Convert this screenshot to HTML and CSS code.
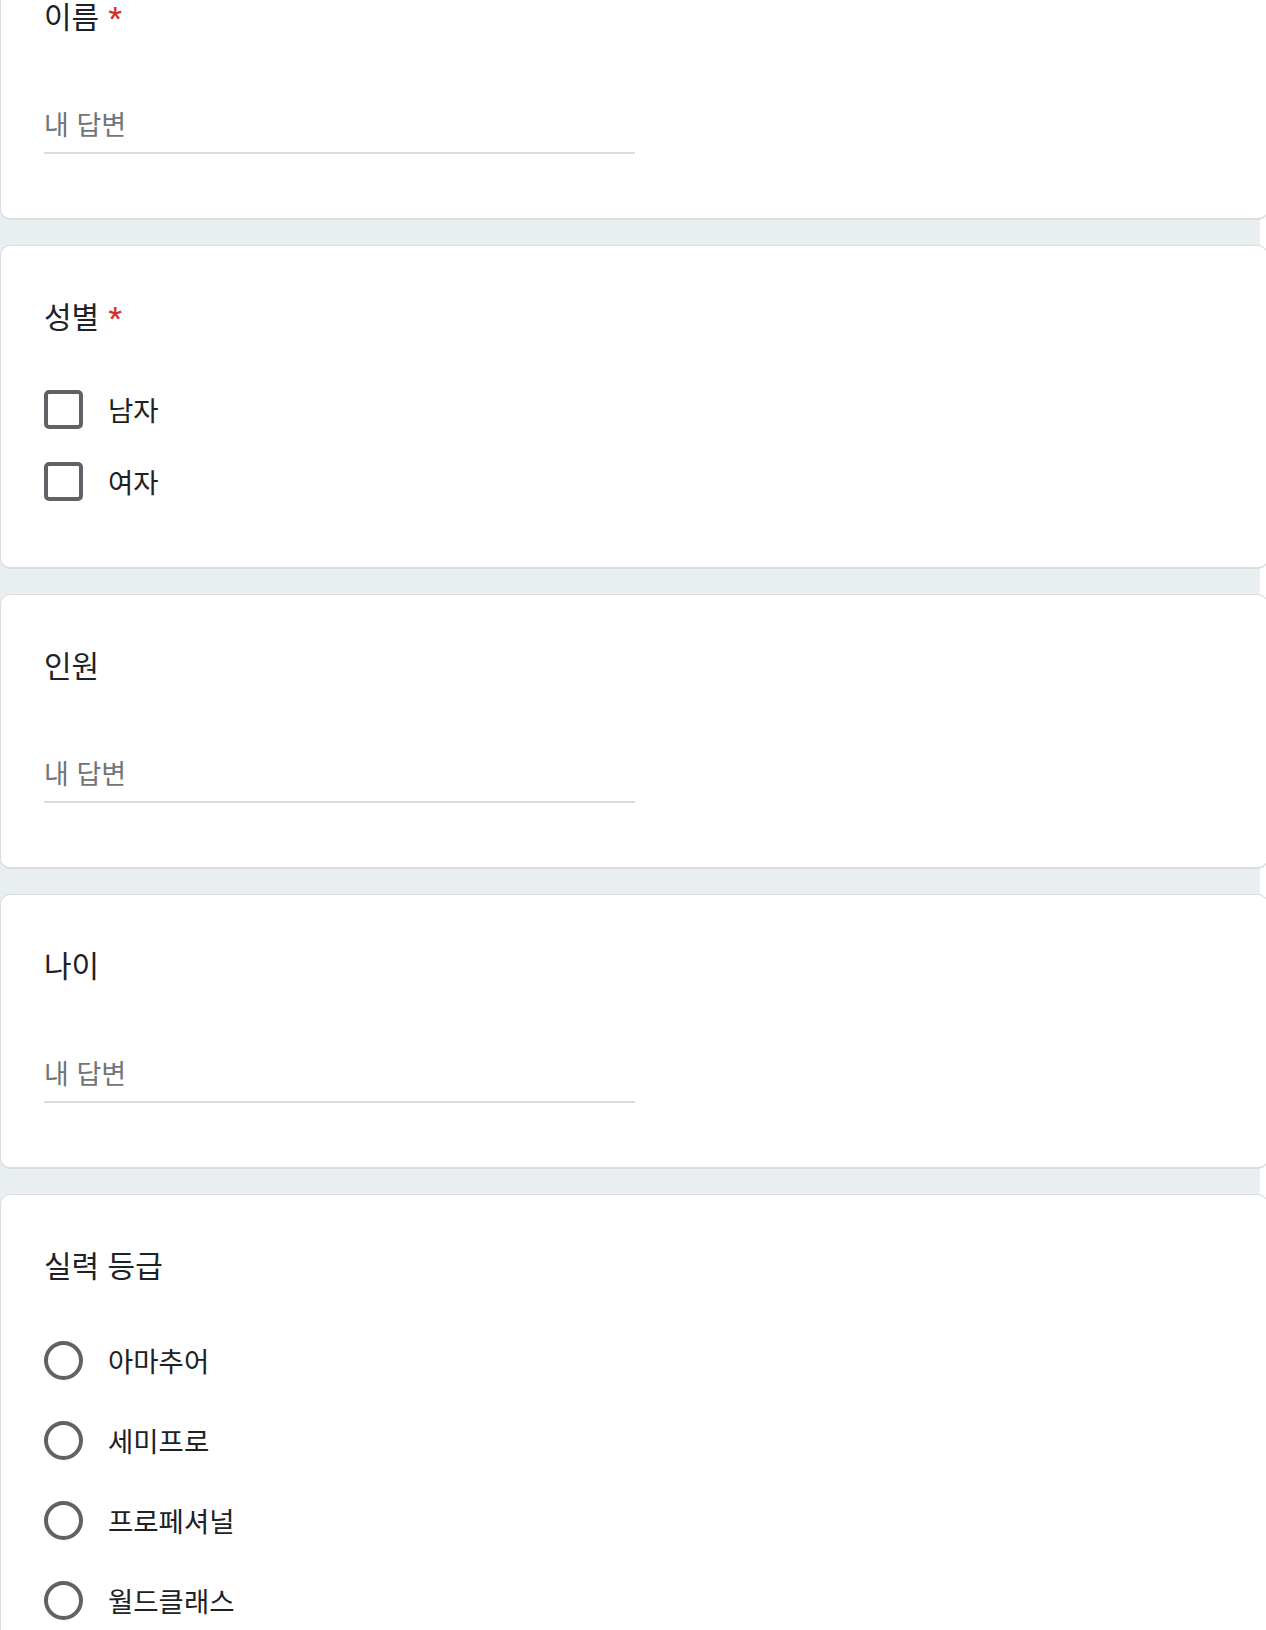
FILE: index.html
```html
<!DOCTYPE html>
<html lang="ko">
<head>
<meta charset="utf-8">
<title>Form</title>
<link rel="stylesheet" href="styles.css">
</head>
<body>
<div class="page">
  <section class="card">
    <div class="q-title">이름 <span class="req">*</span></div>
    <div class="answer"><span class="placeholder">내 답변</span></div>
  </section>

  <section class="card">
    <div class="q-title">성별 <span class="req">*</span></div>
    <div class="options checks">
      <label class="opt"><span class="box"></span><span class="opt-text">남자</span></label>
      <label class="opt"><span class="box"></span><span class="opt-text">여자</span></label>
    </div>
  </section>

  <section class="card">
    <div class="q-title">인원</div>
    <div class="answer"><span class="placeholder">내 답변</span></div>
  </section>

  <section class="card">
    <div class="q-title">나이</div>
    <div class="answer"><span class="placeholder">내 답변</span></div>
  </section>

  <section class="card">
    <div class="q-title">실력 등급</div>
    <div class="options radios">
      <label class="opt"><span class="circle"></span><span class="opt-text">아마추어</span></label>
      <label class="opt"><span class="circle"></span><span class="opt-text">세미프로</span></label>
      <label class="opt"><span class="circle"></span><span class="opt-text">프로페셔널</span></label>
      <label class="opt"><span class="circle"></span><span class="opt-text">월드클래스</span></label>
    </div>
  </section>
</div>
</body>
</html>
```

FILE: styles.css
```css
html, body {
  margin: 0;
  padding: 0;
  background: #ffffff;
  overflow: hidden;
}

body {
  font-family: "Noto Sans CJK KR", "Noto Sans", sans-serif;
  color: #202124;
}

.page {
  width: 1260px;
  margin-top: -55px;
  background: #e9eef1;
  display: flex;
  flex-direction: column;
  gap: 25px;
}

.card {
  background: #ffffff;
  border: 1px solid #dadce0;
  border-bottom-width: 2px;
  border-radius: 10px;
  padding: 49px 43px 0 43px;
  margin-right: -8px;
}

.q-title {
  font-size: 30px;
  line-height: 40px;
  height: 40px;
  white-space: nowrap;
}

.req {
  color: #d93025;
  font-family: Roboto, "Liberation Sans", sans-serif;
  font-weight: 500;
  font-size: 30px;
  margin-left: 1px;
}

.answer {
  margin-top: 72px;
  width: 591px;
  border-bottom: 2px solid #dadce0;
  padding-bottom: 11px;
  margin-bottom: 64px;
}

.placeholder {
  font-size: 27px;
  line-height: 34px;
  display: block;
  color: #70757a;
}

.options {
  display: flex;
  flex-direction: column;
}

.checks {
  gap: 33px;
  margin-top: 55px;
  margin-bottom: 66px;
}

.radios {
  gap: 41px;
  margin-top: 57px;
  margin-bottom: 65px;
}

.opt {
  display: flex;
  align-items: center;
  gap: 25px;
  font-size: 27.5px;
  line-height: 39px;
  white-space: nowrap;
}

.box {
  width: 39px;
  height: 39px;
  box-sizing: border-box;
  border: 4px solid #5f6368;
  border-radius: 5px;
  flex: none;
}

.circle {
  width: 39px;
  height: 39px;
  box-sizing: border-box;
  border: 4px solid #5f6368;
  border-radius: 50%;
  flex: none;
}
```
